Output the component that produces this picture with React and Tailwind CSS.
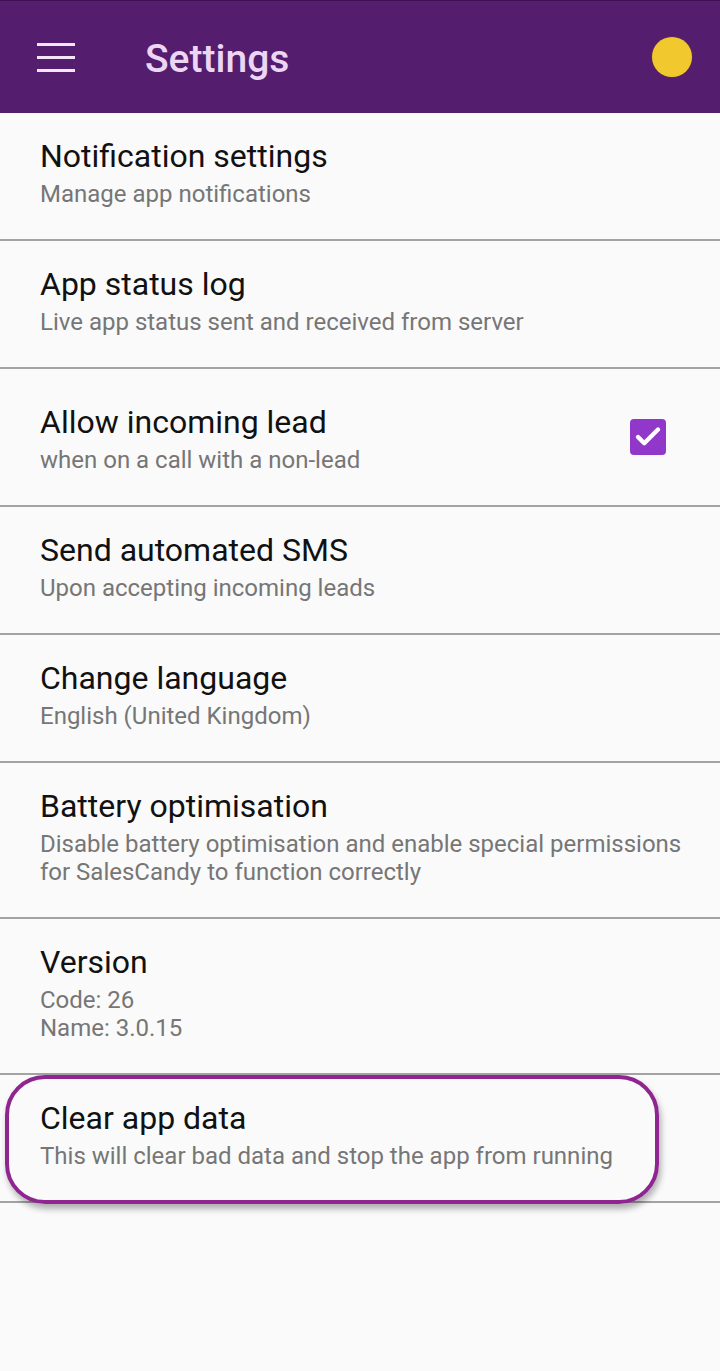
import { Check } from 'lucide-react'

const ROWS = [
  { title: 'Notification settings', sub: ['Manage app notifications'] },
  { title: 'App status log', sub: ['Live app status sent and received from server'] },
  { title: 'Allow incoming lead', sub: ['when on a call with a non-lead'], checkbox: true },
  { title: 'Send automated SMS', sub: ['Upon accepting incoming leads'] },
  { title: 'Change language', sub: ['English (United Kingdom)'] },
  {
    title: 'Battery optimisation',
    sub: ['Disable battery optimisation and enable special permissions', 'for SalesCandy to function correctly'],
  },
  { title: 'Version', sub: ['Code: 26', 'Name: 3.0.15'] },
  { title: 'Clear app data', sub: ['This will clear bad data and stop the app from running'], highlight: true },
]

function Header() {
  return (
    <header className="flex h-[113px] items-center border-t border-[#3e1052] bg-[#541d6e] pl-[37px] pr-[28px]">
      <div className="flex flex-col gap-[10px]">
        <span className="h-[3px] w-[38px] bg-[#f3e6f7]" />
        <span className="h-[3px] w-[38px] bg-[#f3e6f7]" />
        <span className="h-[3px] w-[38px] bg-[#f3e6f7]" />
      </div>
      <h1 className="ml-[70px] mt-[4px] text-[39px] font-medium leading-none text-[#ecd6f4]">Settings</h1>
      <span className="ml-auto h-[40px] w-[40px] rounded-full bg-[#f1c92f] ring-1 ring-[#6b3a3a]/40" />
    </header>
  )
}

function Row({ row }) {
  return (
    <div className="relative flex items-center border-b-2 border-[#a3a3a3]">
      <div className={`px-10 pb-[31px] ${row.checkbox ? 'pt-[35px]' : 'pt-[25px]'}`}>
        <div className="whitespace-nowrap text-[32px] leading-[36px] text-[#111]">{row.title}</div>
        <div className="mt-[6px] whitespace-nowrap text-[24px] leading-[28px] text-[#767676]">
          {row.sub.map((line) => (
            <div key={line}>{line}</div>
          ))}
        </div>
      </div>
      {row.checkbox && (
        <span className="ml-auto mr-[54px] flex h-[36px] w-[36px] items-center justify-center rounded-[4px] bg-[#9137c9]">
          <Check size={30} strokeWidth={3.5} className="text-white" />
        </span>
      )}
      {row.highlight && (
        <div className="absolute left-[5px] top-0 h-[129px] w-[654px] rounded-[40px] border-4 border-[#8e2591] shadow-[2px_5px_6px_rgba(0,0,0,0.3)]" />
      )}
    </div>
  )
}

export default function App() {
  return (
    <div className="min-h-[1371px] w-[720px] bg-[#fafafa] font-['Roboto',sans-serif]">
      <Header />
      {ROWS.map((row) => (
        <Row key={row.title} row={row} />
      ))}
    </div>
  )
}
